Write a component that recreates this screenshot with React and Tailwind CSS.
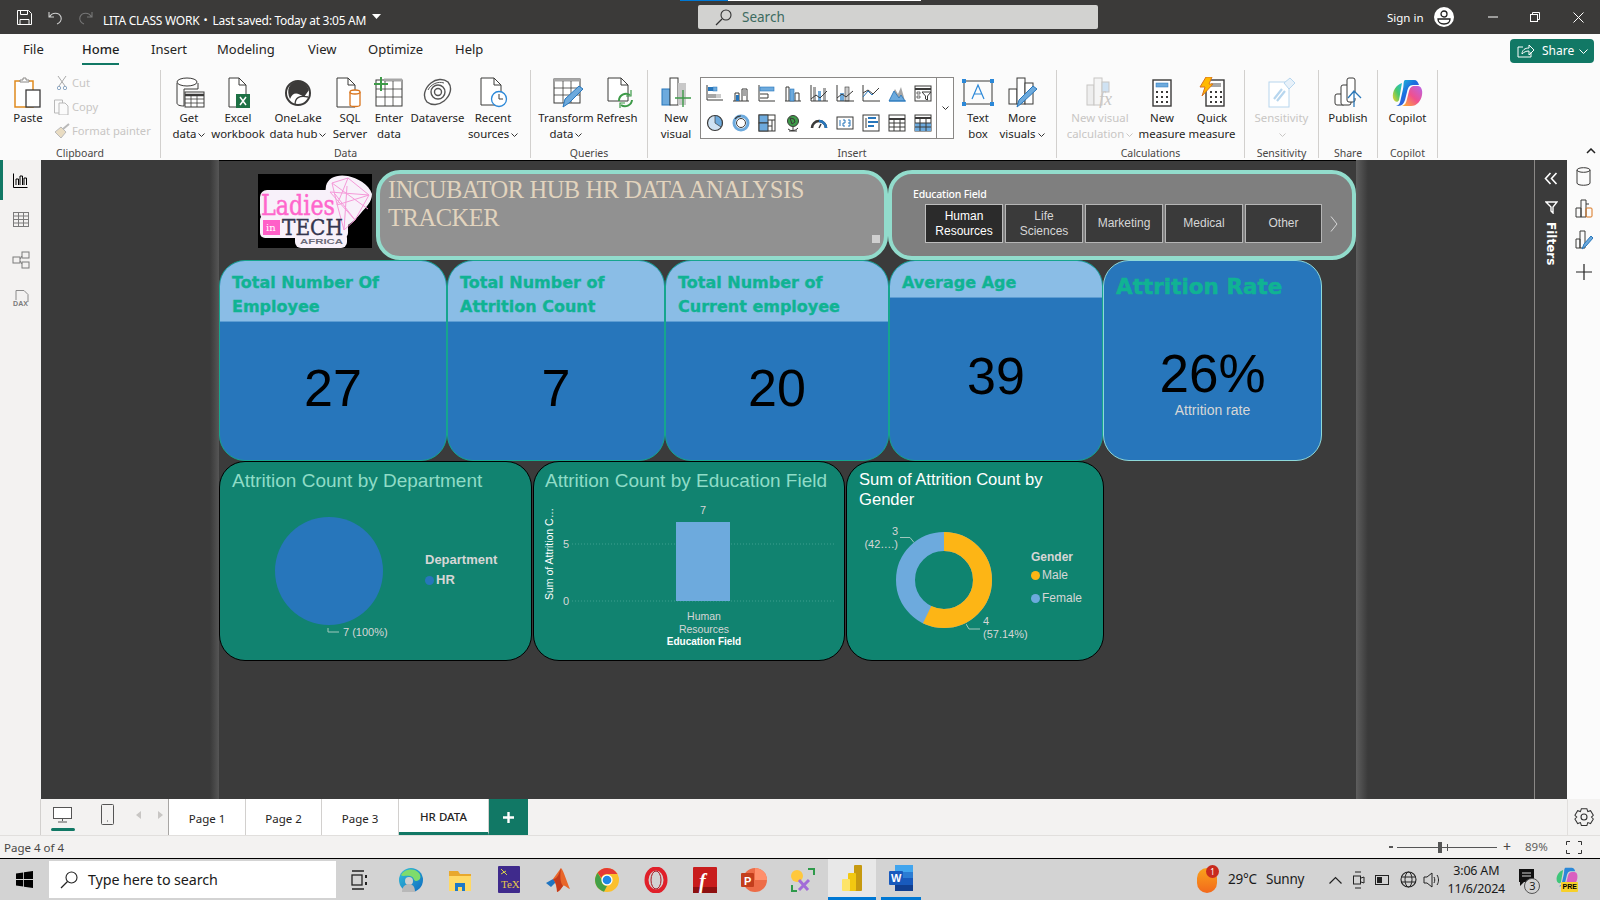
import React from "react";

const S = ({ w = 18, h = 18, vb, children, className = "" }) => (
  <svg width={w} height={h} viewBox={vb || `0 0 ${w} ${h}`} fill="none" className={`block shrink-0 ${className}`}>{children}</svg>
);
const K = "#3b3a39", B = "#6daadd", BD = "#2776bb", G = "#a6a6a6";

const Gallery = [
  <><path d="M1 1v15h16" stroke={K}/><rect x="2" y="3" width="5" height="4" fill={BD}/><rect x="7" y="3" width="4" height="4" fill={B} stroke={BD} strokeWidth=".5"/><rect x="2" y="10" width="8" height="4" fill={G}/><rect x="10" y="10" width="5" height="4" fill="#ccc"/></>,
  <><path d="M1 17h16" stroke={K}/><path d="M3 17V9h4v8M10 17V5h5v12" stroke={K}/><rect x="4" y="11" width="3" height="6" fill={BD}/><rect x="11" y="6" width="4" height="6" fill={G}/></>,
  <><path d="M1 1v16h16" stroke={K}/><rect x="2" y="3" width="14" height="4" fill={B} stroke={BD} strokeWidth=".6"/><path d="M2 10h8v4H2" stroke={K}/></>,
  <><path d="M1 17h16M2 17V3h3v14M11 17V9h4v8" stroke={K}/><rect x="6" y="5" width="4" height="12" fill={B} stroke={BD} strokeWidth=".6"/></>,
  <><rect x="3" y="3" width="3" height="14" fill={G}/><rect x="8" y="7" width="3" height="10" fill={B}/><rect x="13" y="4" width="3" height="13" fill={G}/><path d="M1 1v16h17M1 15l5-4 4 3 7-7" stroke={K}/></>,
  <><rect x="4" y="9" width="4" height="8" fill={B}/><rect x="9" y="3" width="4" height="14" fill="#ccc" stroke={K} strokeWidth=".6"/><path d="M1 1v16h17M1 14l5-4 4 3 7-6" stroke={K}/></>,
  <><path d="M1 1v16h17" stroke={K}/><path d="M1 13l5-6 4 4 7-7" stroke={BD}/><path d="M1 9l5-3 5 4 6-6" stroke={K}/></>,
  <><path d="M1 17L7 5l3 5 3-7 4 14z" fill={G}/><path d="M1 17L6 7l5 7 2-3 4 6z" fill={B} stroke={BD} strokeWidth=".8"/><path d="M1 17h17" stroke={BD}/></>,
  <><rect x="1" y="2" width="16" height="15" stroke={K}/><path d="M1 5h16" stroke={K} strokeWidth="2"/><path d="M3 8h3v2H3zM3 12h3v2H3z" stroke={K} strokeWidth=".7"/><path d="M8 8h9l-3.5 4v4l-2-1v-3z" fill="#fff" stroke={K}/></>,
  <><circle cx="9" cy="9" r="7.5" stroke={K} strokeWidth="1.2" fill="#cfe2f3"/><path d="M9 9V1.5a7.5 7.5 0 0 1 6 11.5z" fill={B} stroke={K} strokeWidth=".7"/></>,
  <><circle cx="9" cy="9" r="7" stroke={B} strokeWidth="3"/><circle cx="9" cy="9" r="4.5" stroke={K}/><path d="M9 2a7 7 0 0 0-6 3" stroke={K} strokeWidth="1.2"/></>,
  <><rect x="1" y="1" width="16" height="16" stroke={K}/><rect x="1" y="1" width="9" height="8" fill={B} stroke={K}/><rect x="1" y="9" width="9" height="8" fill={B} stroke={K}/><path d="M10 6h7M14 6v11M10 12h4" stroke={K}/></>,
  <><circle cx="9" cy="7" r="5.5" fill="#3d9a48" stroke={K}/><path d="M6 4l4 1 1 3-3 2zM4 15a7 7 0 0 0 10-1M9 13v4M5 17h8" stroke={K}/></>,
  <><path d="M2 14a7 7 0 0 1 14 0" stroke={K} strokeWidth="2.6"/><path d="M9 7a7 7 0 0 1 7 7" stroke={BD} strokeWidth="2.6"/><path d="M9 14l2-4" stroke={K} strokeWidth="1.5"/></>,
  <><rect x="1" y="3" width="16" height="12" stroke={K}/><path d="M4 6v6M7 6h2v3H7v3h2M12 6h2v6h-2M12 9h2" stroke={BD} strokeWidth="1"/></>,
  <><rect x="1" y="1" width="16" height="16" stroke={K}/><path d="M4 4v10" stroke={K}/><path d="M6 4h8M6 8h10M6 12h6" stroke={BD} strokeWidth="2"/></>,
  <><rect x="1" y="1" width="16" height="16" stroke={K}/><path d="M1 5h16" stroke={K} strokeWidth="2"/><path d="M1 9h16M1 13h16M6 5v12M12 5v12" stroke={K}/></>,
  <><rect x="1" y="1" width="16" height="16" stroke={K}/><path d="M1 4h16" stroke={K} strokeWidth="2"/><rect x="1" y="9" width="16" height="8" fill={B}/><path d="M1 9h16M1 13h16M6 5v12M12 5v12" stroke={K}/></>,
];

const I = {
  paste: <S w={28} h={31}><path d="M1 4h18v26H1z" stroke="#e08a1e" strokeWidth="1.5" fill="#fff"/><path d="M6 5V3h3V1h3v2h3v2z" stroke="#8a8886" fill="#fff"/><rect x="12" y="13" width="14" height="17" stroke={K} strokeWidth="1.3" fill="#fff"/></S>,
  getdata: <S w={30} h={31} className="ml-[4px]"><path d="M1 6v20c0 2 3 3 7 3V12h14V6" stroke={K}/><ellipse cx="11" cy="5" rx="10" ry="4" stroke={K} fill="#fff"/><rect x="9" y="15" width="19" height="15" fill="#fff" stroke={K}/><path d="M9 18h19" stroke={K} strokeWidth="2.5"/><path d="M9 22h19M9 26h19M15 18v12M21 18v12" stroke={K} strokeWidth=".8"/></S>,
  excel: <S w={30} h={31}><path d="M6 1h10l7 7v22H6z" stroke={K} fill="#fff"/><path d="M16 1v7h7" stroke={K}/><rect x="13" y="17" width="14" height="14" fill="#1e7145"/><path d="M17 20l6 8M23 20l-6 8" stroke="#fff" strokeWidth="1.5"/></S>,
  onelake: <S w={28} h={30}><circle cx="14" cy="15" r="12" stroke={K} strokeWidth="2" fill="#fff"/><path d="M14 3C5 4 2 12 6 21c3-7 7-7 14-2l5-7C22 5 19 3 14 3z" fill={K}/><path d="M11 27c0-7 4-10 13-8" stroke={K} strokeWidth="1.3"/></S>,
  sql: <S w={30} h={31}><path d="M2 1h11l7 7v22H2z" stroke={K} fill="#fff"/><path d="M13 1v7h7" stroke={K}/><path d="M15 15v13c0 2 10 2 10 0V15" stroke="#d9741c" fill="#fff" strokeWidth="1.3"/><ellipse cx="20" cy="15" rx="5" ry="2" stroke="#d9741c" fill="#fff" strokeWidth="1.3"/></S>,
  enter: <S w={30} h={31}><rect x="2" y="3" width="26" height="26" stroke={K} fill="#fff"/><path d="M10 3h18" stroke={G} strokeWidth="3"/><path d="M2 12h26M2 20h26M11 4v25M19 4v25" stroke={K} strokeWidth=".8"/><path d="M7 0v14M0 7h14" stroke="#3d9a48" strokeWidth="2"/></S>,
  dataverse: <S w={30} h={30}><path d="M8 5c5-4 12-5 17-1 5 6 2 14-4 19-5 4-12 5-17 1C-1 18 2 10 8 5z" stroke="#555" strokeWidth="1.4" fill="#fff"/><circle cx="15" cy="14" r="7" stroke="#555" strokeWidth="1.4"/><circle cx="15" cy="14" r="3.5" stroke="#555" strokeWidth="1.4"/><path d="M5 12c3-6 10-9 16-7" stroke="#555"/></S>,
  recent: <S w={30} h={31}><path d="M3 1h13l7 7v20H3z" stroke={K} fill="#fff"/><path d="M16 1v7h7" stroke={K}/><circle cx="21" cy="22" r="7.5" stroke="#2b88d8" strokeWidth="1.3" fill="#fff"/><path d="M21 17v5h4" stroke={K}/></S>,
  transform: <S w={32} h={31} className="ml-[6px]"><rect x="1" y="2" width="26" height="24" stroke={K} fill="#fff"/><path d="M1 3h26" stroke={G} strokeWidth="3"/><path d="M1 11h26M1 18h26M10 4v22M18 4v22" stroke={K} strokeWidth=".8"/><path d="M10 30l2-8L26 9l4 3-14 14z" fill={B} stroke={BD}/></S>,
  refresh: <S w={30} h={31} className="ml-[6px]"><path d="M3 1h13l7 7v16H3z" stroke={K} fill="#fff"/><path d="M16 1v7h7" stroke={K}/><path d="M14 24a7 7 0 0 1 11-6M27 23a7 7 0 0 1-11 5" stroke="#3d9a48" strokeWidth="2"/><path d="M26 13v6h-5M15 31v-5h5" stroke="#3d9a48" strokeWidth="1.2"/></S>,
  newvisual: <S w={30} h={31}><rect x="1" y="12" width="8" height="16" fill={B} stroke={BD}/><rect x="9" y="1" width="8" height="27" fill="#fff" stroke={K}/><rect x="17" y="6" width="8" height="22" fill="#c8c8c8"/><path d="M22 13v17M14 21h16" stroke="#3d9a48" strokeWidth="1.4"/></S>,
  textbox: <S w={32} h={27}><rect x="2" y="2" width="28" height="23" stroke={K}/><rect x="0" y="0" width="4" height="4" fill="#2b88d8"/><rect x="28" y="0" width="4" height="4" fill="#2b88d8"/><rect x="0" y="23" width="4" height="4" fill="#2b88d8"/><rect x="28" y="23" width="4" height="4" fill="#2b88d8"/><path d="M10 20l6-14 6 14M12 15h8" stroke="#2b88d8" strokeWidth="1.2"/></S>,
  more: <S w={31} h={31} className="ml-[3px]"><rect x="1" y="12" width="8" height="15" stroke={K} fill="#fff"/><rect x="9" y="1" width="8" height="26" stroke={K} fill="#fff"/><rect x="17" y="6" width="8" height="21" stroke={K} fill="#fff"/><path d="M9 30l2-7L25 9l4 3-15 14z" fill={B} stroke={BD}/></S>,
  calc: <S w={32} h={31}><g stroke="#c8c6c4"><rect x="3" y="8" width="7" height="20" fill="#eee"/><rect x="10" y="1" width="8" height="27" fill="#f5f5f5"/><rect x="18" y="5" width="7" height="10" fill="#cfe2f3"/></g><text x="15" y="28" fontFamily="Liberation Serif" fontStyle="italic" fontSize="18" fill="#c8c6c4">fx</text></S>,
  measure: <S w={20} h={28}><rect x="1" y="1" width="18" height="26" stroke={K} strokeWidth="1.4" fill="#fff"/><rect x="4" y="4" width="12" height="4" fill={B} stroke={BD} strokeWidth=".5"/><path d="M4 12h2v2H4zM9 12h2v2H9zM14 12h2v2h-2zM4 17h2v2H4zM9 17h2v2H9zM14 17h2v2h-2zM4 22h2v2H4zM9 22h2v2H9zM14 22h2v2h-2z" fill={K}/></S>,
  quick: <S w={26} h={31}><rect x="7" y="3" width="18" height="26" stroke={K} strokeWidth="1.4" fill="#fff"/><rect x="12" y="6" width="10" height="4" fill={G}/><path d="M11 14h2v2h-2zM16 14h2v2h-2zM21 14h2v2h-2zM11 19h2v2h-2zM16 19h2v2h-2zM21 19h2v2h-2zM11 24h2v2h-2zM16 24h2v2h-2zM21 24h2v2h-2z" fill={K}/><path d="M7 0h6l-3 7h4L3 19l3-9H1z" fill="#ffb900" stroke="#d9741c"/></S>,
  sens: <S w={28} h={31}><rect x="1" y="5" width="20" height="25" stroke="#b7d6ee" fill="#fff"/><path d="M6 22l8-10M9 24l8-10" stroke="#b7d6ee" strokeWidth="2.2"/><path d="M16 6l6-5 5 5-6 6z" stroke="#b7d6ee" fill="#e8f1f9"/></S>,
  publish: <S w={28} h={31}><rect x="1" y="17" width="10" height="11" rx="2" stroke={K} fill="#fff"/><rect x="7" y="8" width="10" height="20" rx="2" stroke={K} fill="#fff"/><rect x="13" y="1" width="8" height="24" rx="2" stroke={K} fill="#fff"/><path d="M20 30V14M14 21l6-7 7 7" stroke="#2b78b8" strokeWidth="1.3" fill="#fff"/></S>,
  copilot: (
    <S w={31} h={28}>
      <defs>
        <linearGradient id="cpa" x1="0" y1="0" x2="1" y2="1"><stop offset="0" stopColor="#1dd3d0"/><stop offset=".45" stopColor="#1a6fe0"/><stop offset="1" stopColor="#6a3bd0"/></linearGradient>
        <linearGradient id="cpb" x1="0" y1="1" x2="1" y2="0"><stop offset="0" stopColor="#ffb52b"/><stop offset=".5" stopColor="#f0508e"/><stop offset="1" stopColor="#b865e8"/></linearGradient>
        <linearGradient id="cpc" x1="0" y1="1" x2="1" y2="0"><stop offset="0" stopColor="#f7d02a"/><stop offset=".5" stopColor="#4ac86a"/><stop offset="1" stopColor="#1dc0d8"/></linearGradient>
      </defs>
      <path d="M13 1h9c3 0 4 2 5 5l-6 0c-4 0-5 3-6 7l-2 8c-1 3-3 6-7 6H4c4-1 4-4 5-8l2-9c1-4 0-8 2-9z" fill="url(#cpa)"/>
      <path d="M1 19C0 12 4 6 10 4c-1 5-2 12-3 17-1 3-5 2-6-2z" fill="url(#cpc)"/>
      <path d="M19 27h-9c3-1 4-3 5-7l2-8c1-3 2-5 6-5h3c3 0 5 4 4 9-1 6-5 11-11 11z" fill="url(#cpb)"/>
    </S>
  ),
};

const Chev = ({ dim }) => (
  <svg width="7" height="4" viewBox="0 0 7 4" fill="none" className="inline-block ml-[2px] align-[1px]"><path d="M.5.500l3 3 3-3" stroke={dim ? "#c8c6c4" : "#333"}/></svg>
);

function RI({ cls, icon, l1, l2, chev, dim }) {
  return (
    <div className={`flex flex-col items-center shrink-0 ${cls}`}>
      <div className="h-[31px] flex items-center justify-center">{icon}</div>
      <div className={`mt-[2px] text-[11.4px] leading-[16px] whitespace-nowrap ${dim ? "text-[#c8c6c4]" : "text-[#252423]"}`}>{l1}</div>
      {l2 !== undefined && <div className={`h-[16px] text-[11.4px] leading-[16px] whitespace-nowrap ${dim ? "text-[#c8c6c4]" : "text-[#252423]"}`}>{l2}{chev && <Chev dim={dim} />}</div>}
    </div>
  );
}

function Group({ cls, label, children }) {
  return (
    <>
      <div className={`flex flex-col h-full shrink-0 ${cls}`}>
        <div className="flex pt-[9px] flex-1">{children}</div>
        <div className="h-[14px] text-[10.5px] leading-[14px] text-center text-[#484644]">{label}</div>
      </div>
      <div className="w-px h-[88px] my-[2px] bg-[#d2d0ce] shrink-0" />
    </>
  );
}

function KpiCard({ cls, title, head, value, bodyCls = "" }) {
  return (
    <div className={`h-[201px] shrink-0 rounded-[26px] border border-[#16a58e] overflow-hidden bg-[#2776bb] flex flex-col ${cls}`}>
      <div className={`bg-[#8abde6] border-b border-[#5d9dd3] pl-[12px] font-['DejaVu_Sans',sans-serif] font-bold text-[16px] leading-[24px] text-[#10b393] [-webkit-text-stroke:0.35px_#10b393] ${head}`}>
        {title.map((t) => <div key={t}>{t}</div>)}
      </div>
      <div className={`flex-1 flex items-center justify-center font-['Liberation_Sans',sans-serif] text-[52px] leading-none text-black ${bodyCls}`}>{value}</div>
    </div>
  );
}

function SliceBtn({ cls, children, active }) {
  return (
    <div className={`h-[39px] shrink-0 border flex items-center justify-center text-center font-['Liberation_Sans',sans-serif] text-[12px] leading-[15px] ${active ? "bg-[#2b2b2b] text-white border-[#bdbdbd]" : "bg-[#3a3a3a] text-[#d6d6d6] border-[#b5b5b5]"} ${cls}`}>{children}</div>
  );
}

const Dot = ({ c }) => <span className={`inline-block w-[9px] h-[9px] rounded-full shrink-0 ${c}`} />;

function Tab({ cls, children, active }) {
  return (
    <div className={`h-[36px] shrink-0 bg-white border-r border-[#d2d0ce] flex items-center justify-center pt-[3px] text-[11.5px] text-[#252423] ${active ? "border-b-[3px] border-b-[#117865] font-medium" : ""} ${cls}`}>{children}</div>
  );
}

const Logo = () => (
  <svg width="114" height="74" viewBox="0 0 114 74" className="block shrink-0">
    <rect width="114" height="74" fill="#000" />
    <g fill="#f8f1fa">
      <rect x="2" y="16" width="80" height="30" rx="7" />
      <rect x="2" y="41" width="88" height="23" rx="5" />
      <rect x="37" y="58" width="52" height="16" rx="6" />
      <path d="M68 12C70 3 80 0 90 2c9 2 21 8 24 18 0 8-6 13-11 19-4 5-8 9-13 12L78 55 66 30z" />
    </g>
    <g stroke="#f59ad9" strokeWidth="1" fill="none">
      <path d="M74 9l16-5 21 17-14 25-11 10-7-26z" />
      <path d="M74 9l36 26M90 4L79 31M111 21L72 18M97 46L77 20M86 56l3-44M79 31l32-10M72 18l25 28" />
    </g>
    <text x="3" y="41" fontFamily="DejaVu Serif, serif" fontSize="27" fill="#ff66cc" stroke="#ff66cc" strokeWidth=".5" textLength="74" lengthAdjust="spacingAndGlyphs">Ladies</text>
    <rect x="5" y="46" width="17" height="15" fill="#ff5fc8" />
    <text x="8" y="57" fontFamily="DejaVu Serif, serif" fontSize="10" fill="#fff">in</text>
    <text x="24" y="61" fontFamily="DejaVu Serif, serif" fontSize="23" fill="#35364f" stroke="#35364f" strokeWidth=".4" textLength="61" lengthAdjust="spacingAndGlyphs">TECH</text>
    <text x="42" y="70" fontFamily="Liberation Sans, sans-serif" fontWeight="700" fontSize="8" fill="#6b6b78" textLength="43" lengthAdjust="spacingAndGlyphs">AFRICA</text>
  </svg>
);

const Win = () => (
  <S w={17} h={17}><path d="M0 2.4L7.2 1.4V8H0zM8 1.3L17 0v8H8zM0 9h7.2v6.6L0 14.6zM8 9h9v8l-9-1.3z" fill="#000"/></S>
);

const Task = {
  view: <S w={20} h={20}><path d="M4 1h12M4 19h12" stroke="#222" strokeWidth="1.3"/><rect x="4" y="5" width="10" height="10" stroke="#222" strokeWidth="1.3"/><path d="M17 5h2v3h-2zM17 12h2v3h-2z" fill="#222"/></S>,
  edge: (
    <S w={26} h={26}>
      <defs><linearGradient id="edg" x1="0" y1="0" x2="1" y2="1"><stop offset="0" stopColor="#35c1d8"/><stop offset="1" stopColor="#0d6bc0"/></linearGradient></defs>
      <circle cx="13" cy="13" r="12" fill="url(#edg)"/>
      <path d="M3 8C6 2 16 0 21 6c3 4 1 8-3 8-3 0-1-4-6-5-4-1-7 1-9-1z" fill="#7fdc6c"/>
      <circle cx="11" cy="14" r="4" fill="#cfcfcf"/><path d="M4 25c0-6 4-8 7-8s6 2 6 8z" fill="#b8b8b8"/>
    </S>
  ),
  folder: <S w={24} h={24}><path d="M1 3h9l2 3h11v4H1z" fill="#e8a82e"/><path d="M1 8h22v15H1z" fill="#ffd966"/><rect x="7" y="15" width="10" height="8" fill="#1f78c8"/><rect x="10" y="19" width="4" height="4" fill="#ffd966"/></S>,
  tex: <svg width="22" height="27" viewBox="0 0 22 27" className="block"><rect width="22" height="27" rx="1" fill="#3f2a8c"/><path d="M3 3l6 6M3 8l5-3" stroke="#d9d24a"/><text x="3" y="22" fontFamily="Liberation Serif, serif" fontSize="11" fill="#e6c84a">TeX</text></svg>,
  matlab: <S w={26} h={24}><path d="M1 15l7-4 3 3-5 5z" fill="#1f74c0"/><path d="M8 11l8-11c3 3 6 15 9 21-3-1-6-5-7-3-2 2-3 5-6 6 0-5-2-11-4-13z" fill="#e8662a"/><path d="M12 24c3-1 4-4 6-6-3-4-3-10-2-18-2 5-3 11-8 11 3 3 4 8 4 13z" fill="#c43a1a"/></S>,
  chrome: <S w={24} h={24}><circle cx="12" cy="12" r="12" fill="#fbc02d"/><path d="M12 0a12 12 0 0 1 10.4 6H12a6 6 0 0 0-5.6 4L2.6 4.7A12 12 0 0 1 12 0z" fill="#e53935"/><path d="M2.6 4.7L7 12a5 5 0 0 0 5 6l-3 5.7A12 12 0 0 1 2.6 4.7z" fill="#43a047"/><circle cx="12" cy="12" r="5.6" fill="#fff"/><circle cx="12" cy="12" r="4.3" fill="#1e88e5"/></S>,
  opera: <S w={24} h={26}><ellipse cx="12" cy="13" rx="9.500" ry="11.500" stroke="#e0202a" strokeWidth="4"/><ellipse cx="12" cy="13" rx="5" ry="9" stroke="#a81620"/></S>,
  flash: <svg width="24" height="26" viewBox="0 0 24 26" className="block"><rect width="24" height="26" rx="1" fill="#c81c1c"/><rect y="20" width="24" height="6" fill="#8e1010"/><text x="6" y="21" fontFamily="Liberation Serif, serif" fontStyle="italic" fontWeight="700" fontSize="20" fill="#fff">f</text></svg>,
  ppt: <svg width="26" height="24" viewBox="0 0 26 24" className="block"><circle cx="14" cy="12" r="12" fill="#ed6c47"/><path d="M14 0a12 12 0 0 1 12 12H14z" fill="#ff8f6b"/><rect x="0" y="5" width="13" height="14" rx="1" fill="#c43e1c"/><text x="3" y="16.500" fontFamily="Liberation Sans, sans-serif" fontWeight="700" fontSize="11" fill="#fff">P</text></svg>,
  tool: <S w={24} h={24}><circle cx="6" cy="8" r="6" fill="#ffc83d"/><path d="M8 12l9 10M18 12L8 22" stroke="#a26bd8" strokeWidth="3"/><path d="M17 1h6v6" stroke="#2e9a4a" strokeWidth="2"/><path d="M1 17v6h5" stroke="#2e9a4a" strokeWidth="2"/></S>,
  pbi: <S w={20} h={26}><rect x="12" y="0" width="8" height="26" rx="1" fill="#c79a10"/><rect x="6" y="8" width="8" height="18" rx="1" fill="#f2c811"/><rect x="0" y="14" width="8" height="12" rx="1" fill="#fde468"/></S>,
  word: <svg width="24" height="26" viewBox="0 0 24 26" className="block"><rect x="6" y="0" width="18" height="26" rx="1" fill="#2b7cd3"/><rect x="6" y="0" width="18" height="7" fill="#41a5ee"/><rect x="6" y="13" width="18" height="7" fill="#185abd"/><rect x="6" y="20" width="18" height="6" fill="#103f91"/><rect x="0" y="6" width="14" height="14" rx="1" fill="#185abd"/><text x="2" y="17" fontFamily="Liberation Sans, sans-serif" fontWeight="700" fontSize="11" fill="#fff">W</text></svg>,
};

export default function App() {
  return (
    <div className="relative w-[1600px] h-[900px] overflow-hidden flex flex-col bg-[#3b3b3b] font-['Noto_Sans',sans-serif] text-[#252423]">
      {/* title bar */}
      <div className="relative h-[34px] shrink-0 bg-[#3b3a39] flex items-center text-white">
        <div className="absolute top-0 left-[680px] w-[241px] h-px bg-white"><div className="w-[48px] h-px bg-[#0078d4]" /></div>
        <div className="w-[698px] shrink-0 flex items-center pl-[17px]">
          <S w={15} h={15}><path d="M.5.5h11l3 3v11H.5z" stroke="#fff"/><path d="M3.5.5v4h7v-4M3 14.5v-5h9v5" stroke="#fff"/></S>
          <S w={15} h={15} className="ml-[16px]"><path d="M1 2v5h5M1.5 7C4 2 11 2 13 7c1 3-1 6-4 7" stroke="#d0d0d0" strokeWidth="1.1"/></S>
          <S w={15} h={15} className="ml-[15px]"><path d="M14 2v5H9M13.5 7C11 2 4 2 2 7c-1 3 1 6 4 7" stroke="#777" strokeWidth="1.1"/></S>
          <div className="ml-[10px] mt-[7px] text-[12px] leading-[16px] whitespace-nowrap tracking-[-0.25px]">LITA CLASS WORK</div>
          <div className="ml-[4px] mt-[7px] text-[11px]">•</div>
          <div className="ml-[5px] mt-[7px] text-[12px] leading-[16px] whitespace-nowrap tracking-[-0.28px]">Last saved: Today at 3:05 AM</div>
          <S w={9} h={5} className="ml-[6px] mb-[2px]"><path d="M0 0h9L4.5 5z" fill="#fff"/></S>
        </div>
        <div className="w-[400px] h-[24px] shrink-0 rounded-[2px] bg-[#d2d2d0] flex items-center pl-[17px]">
          <S w={17} h={17}><circle cx="11" cy="6" r="5" stroke="#333" strokeWidth="1.1"/><path d="M7 10l-6 6" stroke="#333" strokeWidth="1.2"/></S>
          <div className="ml-[10px] text-[13.5px] text-[#3d6b60]">Search</div>
        </div>
        <div className="flex-1 flex items-center">
          <div className="ml-[289px] mt-[1px] text-[11.5px] whitespace-nowrap">Sign in</div>
          <div className="ml-[10px] w-[20px] h-[20px] rounded-full bg-white flex items-center justify-center">
            <S w={14} h={15}><circle cx="7" cy="4" r="3" stroke="#222" strokeWidth="1.3"/><path d="M1 9h12c0 3-2 5-6 5S1 12 1 9z" stroke="#222" strokeWidth="1.3"/></S>
          </div>
          <S w={10} h={2} className="ml-[34px]"><path d="M0 1h10" stroke="#fff"/></S>
          <S w={10} h={10} className="ml-[32px]"><rect x=".5" y="2.5" width="7" height="7" stroke="#fff"/><path d="M2.5 2V.5h7v7H8" stroke="#fff"/></S>
          <S w={11} h={11} className="ml-[33px]"><path d="M.5.5l10 10M10.500.5l-10 10" stroke="#fff"/></S>
        </div>
      </div>

      {/* menu tabs */}
      <div className="h-[34px] shrink-0 bg-[#fbfbfb] flex items-center text-[13px] text-[#252423]">
        <div className="-mt-[2px] flex items-center">
          <div className="ml-[23px] w-[20px]">File</div>
          <div className="relative ml-[39px] w-[37px] font-medium text-[#1f1f1f]">Home<div className="absolute left-0 right-0 top-[23px] h-[2px] bg-[#117865]" /></div>
          <div className="ml-[32px] w-[34px]">Insert</div>
          <div className="ml-[32px] w-[58px]">Modeling</div>
          <div className="ml-[33px] w-[29px]">View</div>
          <div className="ml-[31px] w-[55px]">Optimize</div>
          <div className="ml-[32px] w-[29px]">Help</div>
        </div>
        <div className="ml-auto mr-[6px] w-[84px] h-[24px] rounded-[4px] bg-[#117865] text-white flex items-center pl-[7px] text-[12px]">
          <S w={17} h={14}><path d="M14 8v5H1V3h5" stroke="#fff"/><path d="M5 10c0-4 3-6 7-6V1l5 5-5 5V7c-3 0-5 1-7 3z" stroke="#fff"/></S>
          <span className="ml-[8px]">Share</span>
          <S w={9} h={5} className="ml-[5px]"><path d="M.5.500l4 4 4-4" stroke="#fff"/></S>
        </div>
      </div>

      {/* ribbon */}
      <div className="h-[92px] shrink-0 bg-[#fbfbfb] flex">
        <Group cls="w-[160px]" label="Clipboard">
          <RI cls="w-[52px] ml-[2px]" icon={I.paste} l1="Paste" />
          <div className="-mt-[6px] text-[11.2px] leading-[24px] text-[#c8c6c4]">
            <div className="flex items-center h-[24px]"><div className="w-[18px] pl-[3px]"><S w={10} h={14}><path d="M1 0l7 10M9 0L2 10" stroke="#a9a9a9"/><circle cx="2" cy="12" r="1.7" stroke="#8ea9c4"/><circle cx="8" cy="12" r="1.7" stroke="#8ea9c4"/></S></div><span>Cut</span></div>
            <div className="flex items-center h-[24px]"><div className="w-[18px]"><S w={15} h={16}><path d="M.5 1h8v13h-8z" stroke="#b9b9b9"/><path d="M5 4h6l3 3v9H5z" stroke="#b9b9b9" fill="#fbfbfb"/></S></div><span>Copy</span></div>
            <div className="flex items-center h-[24px]"><div className="w-[18px]"><S w={16} h={16}><path d="M1 9l6-5 5 5-5 6z" fill="#e9dcc2" stroke="#b9b9b9"/><path d="M9 6l6-5" stroke="#b9b9b9" strokeWidth="2"/></S></div><span className="whitespace-nowrap">Format painter</span></div>
          </div>
        </Group>
        <Group cls="w-[369px]" label="Data">
          <RI cls="w-[56px]" icon={I.getdata} l1="Get" l2="data" chev />
          <RI cls="w-[42px]" icon={I.excel} l1="Excel" l2="workbook" />
          <RI cls="w-[78px]" icon={I.onelake} l1="OneLake" l2="data hub" chev />
          <RI cls="w-[26px]" icon={I.sql} l1="SQL" l2="Server" />
          <RI cls="w-[52px]" icon={I.enter} l1="Enter" l2="data" />
          <RI cls="w-[45px]" icon={I.dataverse} l1="Dataverse" />
          <RI cls="w-[66px]" icon={I.recent} l1="Recent" l2="sources" chev />
        </Group>
        <Group cls="w-[116px]" label="Queries">
          <RI cls="w-[70px]" icon={I.transform} l1="Transform" l2="data" chev />
          <RI cls="w-[32px]" icon={I.refresh} l1="Refresh" />
        </Group>
        <Group cls="w-[408px]" label="Insert">
          <RI cls="w-[48px] ml-[4px]" icon={I.newvisual} l1="New" l2="visual" />
          <div className="w-[254px] h-[62px] shrink-0 border border-[#8a8886] bg-white flex">
            <div className="flex-1 grid grid-cols-9 grid-rows-2 pl-[1px]">
              {Gallery.map((g, i) => (
                <div key={i} className="flex items-center justify-center"><S w={18} h={18}>{g}</S></div>
              ))}
            </div>
            <div className="w-[17px] border-l border-[#8a8886] flex items-center justify-center">
              <S w={7} h={4}><path d="M.5.500l3 3 3-3" stroke="#333"/></S>
            </div>
          </div>
          <RI cls="w-[48px]" icon={I.textbox} l1="Text" l2="box" />
          <RI cls="w-[40px]" icon={I.more} l1="More" l2="visuals" chev />
        </Group>
        <Group cls="w-[187px]" label="Calculations">
          <RI cls="w-[86px]" dim icon={I.calc} l1="New visual" l2="calculation" chev />
          <RI cls="w-[38px]" icon={I.measure} l1="New" l2="measure" />
          <RI cls="w-[62px]" icon={I.quick} l1="Quick" l2="measure" />
        </Group>
        <Group cls="w-[73px]" label="Sensitivity">
          <RI cls="w-[73px]" dim icon={I.sens} l1="Sensitivity" l2="" chev />
        </Group>
        <Group cls="w-[58px]" label="Share">
          <RI cls="w-[58px]" icon={I.publish} l1="Publish" />
        </Group>
        <Group cls="w-[59px]" label="Copilot">
          <RI cls="w-[59px]" icon={I.copilot} l1="Copilot" />
        </Group>
        <div className="flex-1 flex items-end justify-end pb-[6px] pr-[4px]">
          <S w={10} h={6}><path d="M1 5l4-4 4 4" stroke="#222" strokeWidth="1.5"/></S>
        </div>
      </div>

      {/* main */}
      <div className="h-[639px] shrink-0 flex">
        <div className="relative w-[41px] shrink-0 bg-[#f3f2f1] flex flex-col items-center pt-[13px]">
          <div className="absolute left-0 top-0 w-[3px] h-[40px] bg-[#117865]" />
          <S w={15} h={15}><path d="M.5.5v14h14" stroke="#000"/><path d="M3 12V6h2.500v6M7 12V3h2.500v9M11 12V5h2.500v7" stroke="#000"/></S>
          <S w={16} h={15} className="mt-[24px]"><rect x=".5" y=".5" width="15" height="14" stroke="#7b7b7b"/><path d="M.5 4h15M.5 7.500h15M.5 11h15M5.500 1v14M10.500 1v14" stroke="#7b7b7b"/></S>
          <S w={18} h={18} className="mt-[24px]"><rect x="10" y="1" width="7" height="6" stroke="#7b7b7b"/><rect x="1" y="6" width="7" height="6" stroke="#7b7b7b"/><rect x="10" y="11" width="7" height="6" stroke="#7b7b7b"/><path d="M8 8l2-3M8 10l2 3" stroke="#7b7b7b"/></S>
          <div className="relative mt-[21px] w-[18px] h-[18px]">
            <S w={14} h={14} className="absolute left-[3px] top-0"><path d="M1 10V.5h8l4 4V12" stroke="#8a8a8a"/></S>
            <div className="absolute left-0 right-0 top-[10px] text-center text-[7px] leading-[8px] font-['Liberation_Sans',sans-serif] font-bold text-[#7b7b7b]">DAX</div>
          </div>
        </div>
        <div className="flex-1 flex bg-[#3a3a3a]">
          <div className="ml-[169px] w-[9px] h-full shrink-0 bg-gradient-to-r from-[#3a3a3a] to-[#565656]" />
          <div className="w-[1137px] h-full shrink-0 bg-[#3b3b3b] border-t border-black pt-[9px]">
            {/* header row */}
            <div className="h-[90px] flex">
              <div className="ml-[39px] mt-[4px] w-[118px] shrink-0"><Logo /></div>
              <div className="relative w-[512px] h-[90px] shrink-0 rounded-[24px] border-[4px] border-[#92dccc] bg-[#919191] pl-[8px] pt-[2px] font-['Liberation_Serif',serif] text-[24.5px] leading-[28px] text-[#e2d4be] tracking-[-0.45px]">
                <div>INCUBATOR HUB HR DATA ANALYSIS</div>
                <div>TRACKER</div>
                <div className="absolute right-[4px] bottom-[13px] w-[8px] h-[8px] bg-[#cfcfcf]" />
              </div>
              <div className="w-[468px] h-[90px] shrink-0 rounded-[24px] border-[4px] border-[#92dccc] bg-[#7f7f7f] pl-[21px] pt-[14px]">
                <div className="text-[10.5px] leading-[13px] text-white font-medium tracking-[-0.2px]">Education Field</div>
                <div className="flex items-center gap-[2px] ml-[12px] mt-[3px]">
                  <SliceBtn cls="w-[78px]" active>Human<br />Resources</SliceBtn>
                  <SliceBtn cls="w-[78px]">Life<br />Sciences</SliceBtn>
                  <SliceBtn cls="w-[78px]">Marketing</SliceBtn>
                  <SliceBtn cls="w-[78px]">Medical</SliceBtn>
                  <SliceBtn cls="w-[77px]">Other</SliceBtn>
                  <S w={8} h={16} className="ml-[6px]"><path d="M1 .5l6 7.500-6 7.500" stroke="#d8d8d8"/></S>
                </div>
              </div>
            </div>
            {/* KPI row */}
            <div className="flex h-[201px]">
              <KpiCard cls="w-[228px]" head="h-[61px] pt-[10px]" title={["Total Number Of", "Employee"]} value="27" bodyCls="pb-[6px]" />
              <KpiCard cls="w-[218px]" head="h-[61px] pt-[10px]" title={["Total Number of", "Attrition Count"]} value="7" bodyCls="pb-[6px]" />
              <KpiCard cls="w-[224px]" head="h-[61px] pt-[10px]" title={["Total Number of", "Current employee"]} value="20" bodyCls="pb-[6px]" />
              <KpiCard cls="w-[214px]" head="h-[37px] pt-[10px]" title={["Average Age"]} value="39" bodyCls="pb-[6px]" />
              <div className="w-[219px] h-[201px] shrink-0 rounded-[26px] border border-[#8ed8d8] bg-[#2776bb] flex flex-col items-center">
                <div className="self-start pl-[12px] pt-[11px] font-['DejaVu_Sans',sans-serif] font-bold text-[21.5px] leading-[30px] text-[#10b393] [-webkit-text-stroke:0.5px_#10b393] whitespace-nowrap">Attrition Rate</div>
                <div className="mt-[46px] font-['Liberation_Sans',sans-serif] text-[53px] leading-[52px] text-black">26%</div>
                <div className="mt-[1px] font-['Liberation_Sans',sans-serif] text-[14px] leading-[18px] text-[#d6d6d6]">Attrition rate</div>
              </div>
            </div>
            {/* charts row */}
            <div className="flex font-['Liberation_Sans',sans-serif] text-[#d6d6d6]">
              <div className="relative w-[313px] h-[200px] shrink-0 rounded-[26px] border border-black bg-[#118370]">
                <div className="h-[38px] flex items-center pl-[12px] text-[19px] text-[#8fdcc7] whitespace-nowrap">Attrition Count by Department</div>
                <div className="flex items-start">
                  <S w={108} h={108} className="ml-[55px] mt-[17px] overflow-visible">
                    <circle cx="54" cy="54" r="54" fill="#2776bb"/>
                    <path d="M53 111v4h11" stroke="#9fc8bd"/>
                  </S>
                  <div className="ml-[42px] mt-[52px] text-[13px] leading-[16px] font-bold">
                    <div>Department</div>
                    <div className="mt-[4px] flex items-center gap-[2px]"><Dot c="bg-[#2776bb]" /><span>HR</span></div>
                  </div>
                </div>
                <div className="absolute left-[123px] top-[163px] text-[11px] leading-[14px]">7 (100%)</div>
              </div>
              <div className="relative ml-px w-[312px] h-[200px] shrink-0 rounded-[26px] border border-black bg-[#118370]">
                <div className="h-[38px] flex items-center pl-[11px] text-[19px] text-[#8fdcc7] whitespace-nowrap">Attrition Count by Education Field</div>
                <S w={310} h={160}>
                  <path d="M38 44h262M38 101h262" stroke="#3f9f8f" strokeDasharray="1 2"/>
                  <rect x="142" y="22" width="54" height="79" fill="#6daadd"/>
                </S>
                <div className="absolute left-[8px] top-[46px] h-[92px] text-[10.5px] leading-[14px] text-white whitespace-nowrap [writing-mode:vertical-rl] rotate-180 text-left">Sum of Attrition C…</div>
                <div className="absolute left-[29px] top-[75px] text-[11px] leading-[14px]">5</div>
                <div className="absolute left-[29px] top-[132px] text-[11px] leading-[14px]">0</div>
                <div className="absolute left-[166px] top-[41px] text-[11px] leading-[14px]">7</div>
                <div className="absolute left-[120px] top-[148px] w-[100px] text-center text-[10.5px] leading-[13px]">Human<br />Resources</div>
                <div className="absolute left-[120px] top-[173px] w-[100px] text-center text-[10px] leading-[13px] font-bold text-white whitespace-nowrap">Education Field</div>
              </div>
              <div className="relative ml-px w-[258px] h-[200px] shrink-0 rounded-[26px] border border-black bg-[#0f8470]">
                <div className="h-[48px] pl-[12px] pt-[8px] text-[16.6px] leading-[20px] text-white">Sum of Attrition Count by<br />Gender</div>
                <div className="flex items-start">
                  <S w={100} h={100} className="ml-[47px] mt-[20px]">
                    <circle cx="50" cy="50" r="38.5" stroke="#6daadd" strokeWidth="19"/>
                    <circle cx="50" cy="50" r="38.5" stroke="#fdb515" strokeWidth="19" strokeDasharray="138.2 241.9" transform="rotate(-90 50 50)"/>
                  </S>
                  <div className="ml-[37px] mt-[39px] text-[12px] leading-[16px]">
                    <div className="font-bold">Gender</div>
                    <div className="mt-[2px] flex items-center gap-[2px]"><Dot c="bg-[#fdb515]" /><span>Male</span></div>
                    <div className="mt-[7px] flex items-center gap-[2px]"><Dot c="bg-[#6daadd]" /><span>Female</span></div>
                  </div>
                </div>
                <div className="absolute left-[16px] top-[63px] w-[35px] text-[11px] leading-[13px] text-right">3<br />(42….)</div>
                <S w={16} h={6} className="absolute left-[53px] top-[75px]"><path d="M0 .5h10l4 5" stroke="#9fc8bd"/></S>
                <S w={15} h={6} className="absolute left-[119px] top-[162px]"><path d="M0 0l3 5h11" stroke="#9fc8bd"/></S>
                <div className="absolute left-[136px] top-[153px] text-[11px] leading-[13px] whitespace-nowrap">4<br />(57.14%)</div>
              </div>
            </div>
          </div>
          <div className="w-[12px] h-full shrink-0 bg-gradient-to-r from-[#5e5e5e] to-[#3a3a3a]" />
          <div className="w-[166px]" />
          <div className="w-[33px] h-full shrink-0 border-l border-[#8a8886] bg-[#3b3b3b] flex flex-col items-center pt-[12px]">
            <S w={14} h={13}><path d="M6.500 1L1.500 6.500l5 5.500M12.500 1l-5 5.500 5 5.500" stroke="#fff" strokeWidth="1.6"/></S>
            <S w={13} h={14} className="mt-[15px]"><path d="M1 2h11L8 7v6L6 11V7z" stroke="#fff" strokeWidth="1.4"/></S>
            <div className="mt-[8px] font-['DejaVu_Sans',sans-serif] font-bold text-[12px] leading-[16px] text-white [writing-mode:vertical-rl]">Filters</div>
          </div>
        </div>
        <div className="w-[33px] shrink-0 bg-[#fbfbfb] flex flex-col items-center pt-[7px]">
          <S w={15} h={19}><path d="M1 3v13c0 3 13 3 13 0V3" stroke={K}/><ellipse cx="7.500" cy="3" rx="6.500" ry="2.300" stroke={K}/></S>
          <S w={18} h={19} className="mt-[13px]"><path d="M1 9h5v9H1zM6 1h5v17H6zM11 5h3" stroke={K}/><rect x="11" y="9" width="6" height="9" rx="1" stroke="#d9741c"/></S>
          <S w={18} h={20} className="mt-[12px]"><path d="M1 9h4v9H1zM5 1h5v17H5z" stroke={K}/><path d="M7 19l2-5 7-8 2 2-7 8z" fill={B} stroke={BD}/></S>
          <S w={16} h={16} className="mt-[14px]"><path d="M8 0v16M0 8h16" stroke="#222" strokeWidth="1.2"/></S>
        </div>
      </div>

      {/* page tabs */}
      <div className="h-[37px] shrink-0 bg-[#f3f2f1] border-b border-[#e1dfdd] flex">
        <div className="w-[41px] shrink-0 border-r border-[#d2d0ce]" />
        <div className="relative w-[128px] shrink-0 border-r border-[#a8a6a4] flex items-start">
          <div className="ml-[12px] mt-[8px] flex flex-col">
            <S w={20} h={16}><rect x=".5" y=".5" width="18" height="11" stroke="#555" fill="#fff"/><path d="M9.500 12v2M5 15h9" stroke="#555"/></S>
            <div className="-ml-[2px] mt-[5px] w-[24px] h-[3px] rounded-[2px] bg-[#117865]" />
          </div>
          <S w={13} h={21} className="ml-[26px] mt-[5px]"><rect x=".5" y=".5" width="12" height="20" rx="1" stroke="#555"/><path d="M6 17h1" stroke="#555"/></S>
          <S w={5} h={8} className="ml-[22px] mt-[12px]"><path d="M5 0v8L0 4z" fill="#c8c6c4"/></S>
          <S w={5} h={8} className="ml-[17px] mt-[12px]"><path d="M0 0v8l5-4z" fill="#c8c6c4"/></S>
        </div>
        <Tab cls="w-[77px]">Page 1</Tab>
        <Tab cls="w-[76px]">Page 2</Tab>
        <Tab cls="w-[77px]">Page 3</Tab>
        <Tab cls="w-[90px]" active>HR DATA</Tab>
        <div className="w-[39px] h-[36px] shrink-0 bg-[#117865] flex items-center justify-center">
          <S w={11} h={11}><path d="M5.500 0v11M0 5.500h11" stroke="#fff" strokeWidth="2.400"/></S>
        </div>
        <div className="flex-1" />
        <div className="w-[33px] h-full shrink-0 border-l border-[#e1dfdd] flex items-center justify-center">
          <S w={20} h={20}><path d="M7 1h6l1 3 3-1 3 5-2 2 2 2-3 5-3-1-1 3H7l-1-3-3 1-3-5 2-2-2-2 3-5 3 1z" transform="scale(.92) translate(1 1)" stroke="#333" strokeWidth="1.1"/><circle cx="10" cy="10" r="3" stroke="#333" strokeWidth="1.100"/></S>
        </div>
      </div>

      {/* status */}
      <div className="h-[23px] shrink-0 bg-[#f3f2f1] border-b border-black flex items-center text-[11.5px] text-[#484644]">
        <div className="ml-[4px] mt-[2px]">Page 4 of 4</div>
        <div className="ml-auto flex items-center">
          <div className="w-[4px] h-[2px] bg-[#555]" />
          <div className="relative ml-[4px] w-[100px] h-px bg-[#555]">
            <div className="absolute left-[41px] -top-[5px] w-[4px] h-[11px] bg-[#555]" />
            <div className="absolute left-[50px] -top-[3px] w-px h-[7px] bg-[#555]" />
          </div>
          <div className="ml-[6px] text-[14px] leading-none">+</div>
          <div className="ml-[14px] w-[27px] text-[#605e5c]">89%</div>
          <S w={16} h={13} className="ml-[14px] mr-[18px]"><path d="M.5 4V.5H4M12 .5h3.500V4M15.500 9v3.500H12M4 12.500H.5V9" stroke="#333"/></S>
        </div>
      </div>

      {/* taskbar */}
      <div className="flex-1 bg-[#d3d3d3] flex items-center text-[#1a1a1a]">
        <div className="w-[49px] shrink-0 flex justify-center"><Win /></div>
        <div className="w-[287px] h-[37px] shrink-0 bg-white flex items-center pl-[11px]">
          <S w={18} h={18}><circle cx="11.500" cy="6.500" r="5.500" stroke="#222" strokeWidth="1.1"/><path d="M7.500 10.500L1 17" stroke="#222" strokeWidth="1.2"/></S>
          <div className="ml-[10px] text-[14.3px] tracking-[-0.1px] whitespace-nowrap">Type here to search</div>
        </div>
        <div className="w-[50px] shrink-0 flex justify-center pr-[6px]">{Task.view}</div>
        {[Task.edge, Task.folder, Task.tex, Task.matlab, Task.chrome, Task.opera, Task.flash, Task.ppt, Task.tool].map((t, i) => (
          <div key={i} className="w-[49px] shrink-0 flex justify-center">{t}</div>
        ))}
        <div className="w-[48px] h-full shrink-0 bg-[#e8e8e8] border-b-[3px] border-[#0078d4] flex items-center justify-center ml-[1px]">{Task.pbi}</div>
        <div className="ml-[5px] w-[40px] h-full shrink-0 border-b-[3px] border-[#0078d4] flex items-center justify-center">{Task.word}</div>
        <div className="relative ml-[276px] w-[21px] h-[30px] shrink-0">
          <div className="absolute left-0 top-[3px] w-[20px] h-[25px] rounded-full bg-gradient-to-b from-[#f9a11b] to-[#f2681c]" />
          <div className="absolute left-[9px] top-0 w-[13px] h-[13px] rounded-full bg-[#c82a1e] text-white text-[8px] leading-[13px] text-center">1</div>
        </div>
        <div className="ml-[10px] text-[13.5px] whitespace-nowrap tracking-[-0.2px]">29°C</div>
        <div className="ml-[9px] text-[13.5px] whitespace-nowrap tracking-[-0.2px]">Sunny</div>
        <S w={13} h={8} className="ml-[25px]"><path d="M.5 7.500l6-6 6 6" stroke="#222" strokeWidth="1.2"/></S>
        <S w={12} h={18} className="ml-[11px]"><path d="M2 1h6M2 17h6" stroke="#222"/><rect x=".5" y="5" width="7" height="8" stroke="#222"/><path d="M8 7l3-1v6l-3-1" stroke="#222"/></S>
        <S w={15} h={10} className="ml-[10px]"><rect x=".5" y=".5" width="13" height="9" stroke="#222"/><rect x="2" y="2" width="5" height="6" fill="#222"/></S>
        <S w={17} h={17} className="ml-[10px]"><circle cx="8.500" cy="8.500" r="7.500" stroke="#222" strokeWidth="1.1"/><ellipse cx="8.500" cy="8.500" rx="3.500" ry="7.500" stroke="#222"/><path d="M1 6h15M1 11h15" stroke="#222"/></S>
        <S w={17} h={16} className="ml-[6px]"><path d="M1 5h3l5-4v14l-5-4H1zM11 5c1 2 1 4 0 6M14 3c2 3 2 7 0 10" stroke="#222"/></S>
        <div className="ml-[5px] w-[62px] text-center text-[12.5px] leading-[18px] tracking-[-0.2px]">3:06 AM<br />11/6/2024</div>
        <div className="relative ml-[11px] w-[18px] h-[24px]">
          <S w={17} h={19}><path d="M1 1h15v13H6l-4 4v-4H1z" fill="#111"/><path d="M4 5h9M4 8h9" stroke="#d3d3d3"/></S>
          <div className="absolute left-[6px] top-[10px] w-[16px] h-[16px] rounded-full border border-[#555] bg-[#d3d3d3] text-[11px] leading-[14px] text-center">3</div>
        </div>
        <div className="relative ml-[20px] w-[22px] h-[26px]">
          <S w={22} h={20} vb="0 0 31 28">
            <path d="M13 1h9c3 0 4 2 5 5l-6 0c-4 0-5 3-6 7l-2 8c-1 3-3 6-7 6H4c4-1 4-4 5-8l2-9c1-4 0-8 2-9z" fill="#2b88d8"/>
            <path d="M1 19C0 12 4 6 10 4c-1 5-2 12-3 17-1 3-5 2-6-2z" fill="#3fc67a"/>
            <path d="M19 27h-9c3-1 4-3 5-7l2-8c1-3 2-5 6-5h3c3 0 5 4 4 9-1 6-5 11-11 11z" fill="#d95fc0"/>
          </S>
          <div className="absolute left-[5px] top-[15px] w-[17px] h-[10px] rounded-[1px] bg-[#f7d02a] text-[7px] leading-[10px] text-center font-bold text-black font-['Liberation_Sans',sans-serif]">PRE</div>
        </div>
      </div>
    </div>
  );
}
